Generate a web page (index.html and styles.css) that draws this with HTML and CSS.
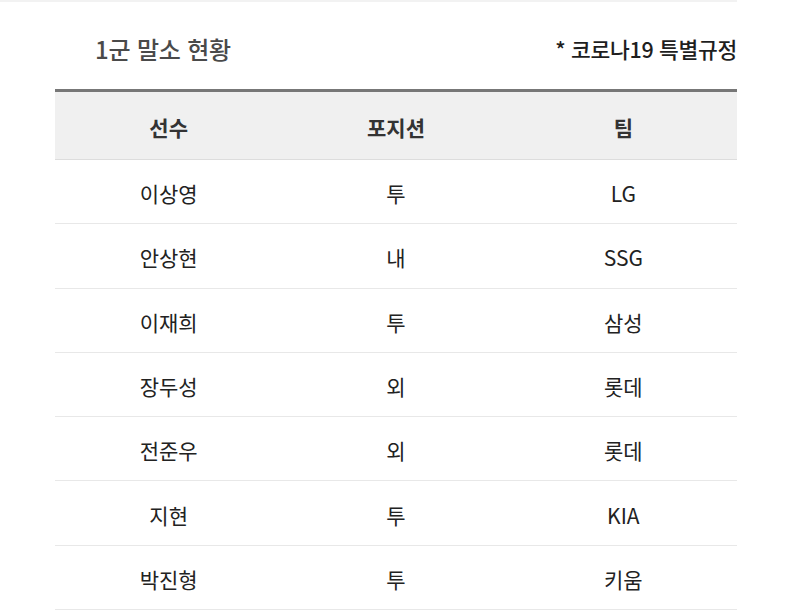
FILE: index.html
```html
<!DOCTYPE html>
<html lang="ko">
<head>
<meta charset="utf-8">
<link rel="stylesheet" href="styles.css">
</head>
<body>
<div class="topline"></div>
<div class="wrap">
  <div class="head">
    <h2 class="title">1군 말소 현황</h2>
    <span class="note">* 코로나19 특별규정</span>
  </div>
  <table class="roster">
    <thead>
      <tr><th>선수</th><th>포지션</th><th>팀</th></tr>
    </thead>
    <tbody>
      <tr><td>이상영</td><td>투</td><td>LG</td></tr>
      <tr><td>안상현</td><td>내</td><td>SSG</td></tr>
      <tr><td>이재희</td><td>투</td><td>삼성</td></tr>
      <tr><td>장두성</td><td>외</td><td>롯데</td></tr>
      <tr><td>전준우</td><td>외</td><td>롯데</td></tr>
      <tr><td>지현</td><td>투</td><td>KIA</td></tr>
      <tr><td>박진형</td><td>투</td><td>키움</td></tr>
    </tbody>
  </table>
</div>
</body>
</html>
```

FILE: styles.css
```css
html, body {
  margin: 0;
  padding: 0;
  background: #fff;
  font-family: "Noto Sans CJK KR", "Noto Sans", sans-serif;
  color: #222;
}
.topline {
  width: 737px;
  height: 2px;
  background: #f2f2f2;
}
.wrap {
  width: 682px;
  margin-left: 55px;
}
.head {
  height: 87px;
  display: flex;
  align-items: center;
  justify-content: space-between;
  padding-top: 6px;
  box-sizing: border-box;
}
.title {
  margin: 0 0 0 40px;
  font-size: 24px;
  font-weight: 500;
  color: #4a4a4a;
  letter-spacing: -0.2px;
}
.note {
  font-size: 21.5px;
  font-weight: 500;
  color: #1e1e1e;
  letter-spacing: -0.3px;
}
.roster {
  width: 100%;
  border-collapse: collapse;
  table-layout: fixed;
  border-top: 3px solid #777;
}
.roster th {
  background: #f0f0f0;
  height: 69px;
  box-sizing: border-box;
  font-size: 21px;
  font-weight: 700;
  color: #333;
  border-bottom: 1px solid #ddd;
  padding: 2px 0 0;
}
.roster td {
  height: 64.3px;
  text-align: center;
  font-size: 21px;
  font-weight: 400;
  color: #222;
  border-bottom: 1px solid #e8e8e8;
  padding: 3px 0 0;
  box-sizing: border-box;
}
```
